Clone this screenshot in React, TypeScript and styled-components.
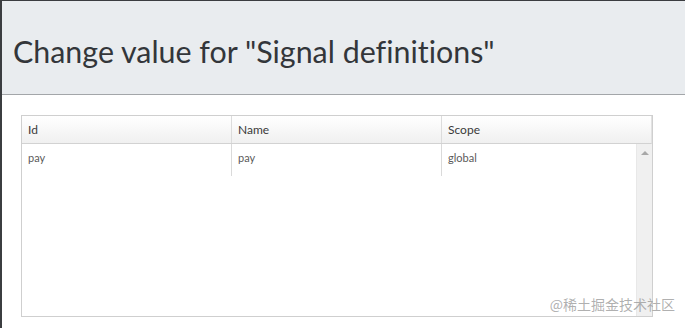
import styled, { createGlobalStyle } from "styled-components";

const GlobalStyle = createGlobalStyle`
  html, body {
    margin: 0;
    padding: 0;
    background: #ffffff;
  }
  body {
    font-family: Lato, "Liberation Sans", sans-serif;
    font-variant-ligatures: none;
  }
`;

const Frame = styled.div`
  position: relative;
  box-sizing: border-box;
  width: 685px;
  height: 328px;
  border-left: 2px solid #3b3d40;
  border-top: 1px solid #3b3d40;
  overflow: hidden;
`;

const Header = styled.div`
  box-sizing: border-box;
  height: 94px;
  background: #e9ecef;
  border-bottom: 1px solid #a3a6a9;
  display: flex;
  align-items: center;
  padding: 6px 0 0 11px;
`;

const Title = styled.h1`
  margin: 0;
  font-family: Lato, "Liberation Sans", sans-serif;
  font-weight: 400;
  font-size: 30.4px;
  color: #33363a;
  font-variant-ligatures: none;
  font-feature-settings: "liga" 0, "clig" 0;
`;

const Content = styled.div`
  padding: 20px 0 0 19px;
`;

const Table = styled.div`
  box-sizing: border-box;
  width: 632px;
  height: 202px;
  border: 1px solid #cfcfcf;
  display: flex;
  flex-direction: column;
`;

const HeaderRow = styled.div`
  display: grid;
  grid-template-columns: 210px 210px 1fr;
  height: 27px;
  background: linear-gradient(#ffffff, #f0f0f0);
  border-bottom: 1px solid #d2d2d2;
  border-right: 1px solid #e2e2e2;
`;

const HeadCell = styled.div<{ $last?: boolean }>`
  display: flex;
  align-items: center;
  padding-left: 6px;
  font-size: 12px;
  color: #3a3a3a;
  border-right: ${(p) => (p.$last ? "none" : "1px solid #dcdcdc")};
`;

const Body = styled.div`
  flex: 1;
  display: flex;
`;

const Rows = styled.div`
  flex: 1;
`;

const Row = styled.div`
  display: grid;
  grid-template-columns: 210px 210px 1fr;
  height: 32px;
`;

const Cell = styled.div<{ $last?: boolean }>`
  padding: 7px 0 0 6px;
  font-size: 11px;
  color: #5a5a5a;
  border-right: ${(p) => (p.$last ? "none" : "1px solid #dadada")};
`;

const Scrollbar = styled.div`
  width: 16px;
  background: #f0f0f0;
  border-left: 1px solid #e8e8e8;
  display: flex;
  justify-content: center;
  padding-top: 7px;
  box-sizing: border-box;
`;

const Arrow = styled.div`
  width: 0;
  height: 0;
  border-left: 4px solid transparent;
  border-right: 4px solid transparent;
  border-bottom: 4px solid #a8a8a8;
`;

const Watermark = styled.div`
  position: absolute;
  right: 10px;
  bottom: 14px;
  font-family: "Noto Sans CJK SC", sans-serif;
  font-size: 14px;
  color: rgba(150, 150, 150, 0.75);
`;

const rows = [{ id: "pay", name: "pay", scope: "global" }];

export default function App() {
  return (
    <>
      <GlobalStyle />
      <Frame>
        <Header>
          <Title>Change value for "Signal definitions"</Title>
        </Header>
        <Content>
          <Table>
            <HeaderRow>
              <HeadCell>Id</HeadCell>
              <HeadCell>Name</HeadCell>
              <HeadCell $last>Scope</HeadCell>
            </HeaderRow>
            <Body>
              <Rows>
                {rows.map((r) => (
                  <Row key={r.id}>
                    <Cell>{r.id}</Cell>
                    <Cell>{r.name}</Cell>
                    <Cell $last>{r.scope}</Cell>
                  </Row>
                ))}
              </Rows>
              <Scrollbar>
                <Arrow />
              </Scrollbar>
            </Body>
          </Table>
        </Content>
        <Watermark>@稀土掘金技术社区</Watermark>
      </Frame>
    </>
  );
}
